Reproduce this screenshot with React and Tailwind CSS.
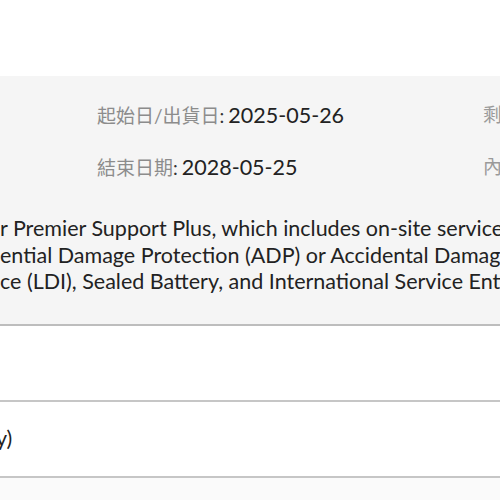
import React from "react";

const font = { fontFamily: "Lato, 'Noto Sans CJK TC', sans-serif" };

const InfoRow = ({ label, value, side }) => {
    return <div className="flex flex-row items-center h-[28px]">
        <div className="w-[97px] shrink-0"></div>
        <div className="flex flex-row items-baseline w-[386px] shrink-0 leading-[28px]">
            <span className="text-[#8c8c8c] text-[19px]">{label}<span className="text-[#333333]">:</span></span>
            <span className="text-[#222222] text-[21.5px] ml-[4px]">{value}</span>
        </div>
        <span className="text-[#9a9a9a] text-[19px] leading-[28px] whitespace-nowrap">{side}</span>
    </div>
}

const App = () => {
    return <div className="w-[500px] h-[500px] overflow-hidden bg-white flex flex-col" style={font}>
        <div className="h-[76px] shrink-0 bg-white"></div>

        <div className="shrink-0 bg-[#f5f5f5] border-b-2 border-[#bdbdbd] pt-[25px] pb-[29px] overflow-hidden">
            <div className="flex flex-col gap-[24px]">
                <InfoRow label="起始日/出貨日" value="2025-05-26" side="剩餘天數" />
                <InfoRow label="結束日期" value="2028-05-25" side="內容" />
            </div>
            <div className="mt-[34px] text-[21.5px] leading-[26.5px] text-[#222222] whitespace-nowrap">
                <div>r Premier Support Plus, which includes on-site service,</div>
                <div>ential Damage Protection (ADP) or Accidental Damage</div>
                <div>ce (LDI), Sealed Battery, and International Service Entitlement.</div>
            </div>
        </div>

        <div className="h-[74px] shrink-0 bg-white"></div>

        <div className="h-[78px] shrink-0 bg-white border-y-2 border-[#c6c6c6] flex items-center">
            <span className="text-[21.5px] text-[#222222] -ml-[4px]">y)</span>
        </div>

        <div className="flex-1 bg-[#fafafa]"></div>
    </div>
}

export default App;
